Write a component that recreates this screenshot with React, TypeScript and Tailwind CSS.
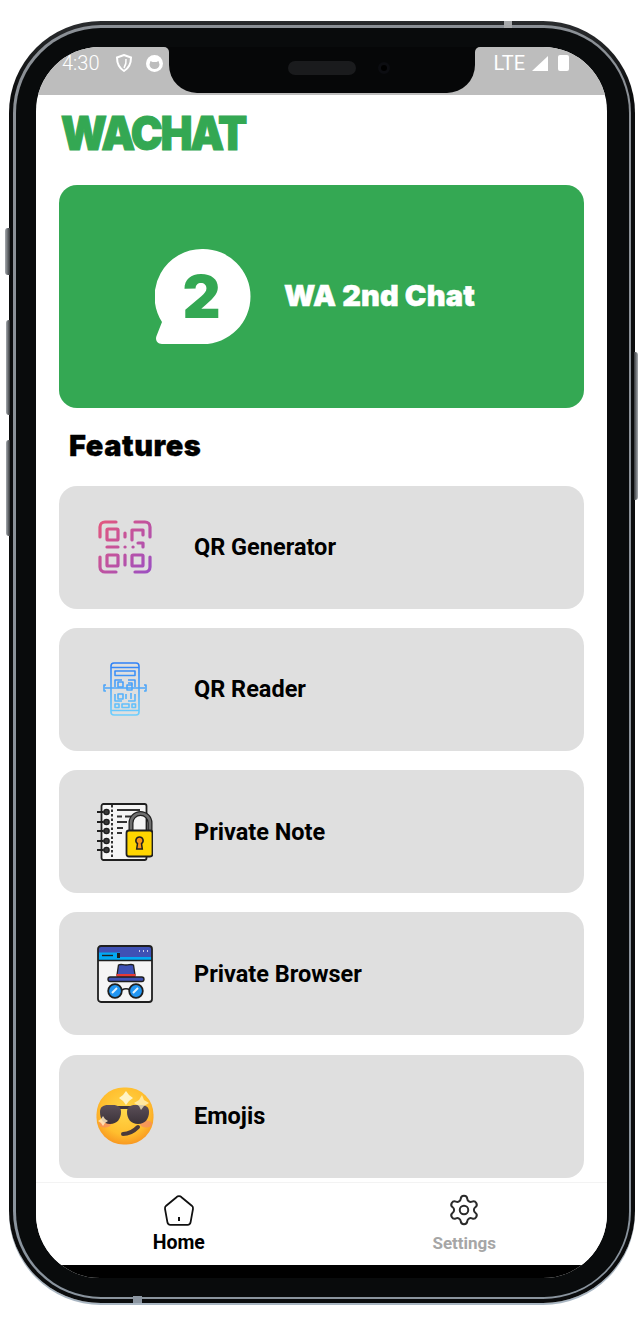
import { Settings } from 'lucide-react';

const features = [
  { label: 'QR Generator', icon: <QrGeneratorIcon /> },
  { label: 'QR Reader', icon: <QrReaderIcon /> },
  { label: 'Private Note', icon: <NoteIcon /> },
  { label: 'Private Browser', icon: <BrowserIcon /> },
  { label: 'Emojis', icon: <EmojiIcon /> },
];

function QrGeneratorIcon() {
  return (
    <svg width="54" height="54" viewBox="0 0 54 54" fill="none">
      <defs>
        <linearGradient id="qrg" gradientUnits="userSpaceOnUse" x1="0" y1="0" x2="54" y2="54">
          <stop offset="0" stopColor="#e5577c" />
          <stop offset="1" stopColor="#9a4fc4" />
        </linearGradient>
      </defs>
      <g stroke="url(#qrg)" strokeWidth="3.2" strokeLinecap="round" strokeLinejoin="round">
        <path d="M2 17V7a5 5 0 0 1 5-5h11" />
        <path d="M37 2h10a5 5 0 0 1 5 5v10" />
        <path d="M2 37v10a5 5 0 0 0 5 5h11" />
        <path d="M37 52h10a5 5 0 0 0 5-5V37" />
        <rect x="9" y="9" width="11" height="11" rx="1" />
        <rect x="9" y="35" width="11" height="11" rx="1" />
        <rect x="34" y="35" width="11" height="11" rx="1" />
        <path d="M9 27h11" />
        <path d="M27 13v4" />
        <path d="M27 35v10" />
        <path d="M27 27h.1" />
        <path d="M34 20V10h11v5" />
        <path d="M40 23h5v4" />
        <path d="M35 27h.1" />
      </g>
    </svg>
  );
}

function QrReaderIcon() {
  return (
    <svg width="44" height="54" viewBox="0 0 44 54" fill="none">
      <defs>
        <linearGradient id="qrr" gradientUnits="userSpaceOnUse" x1="0" y1="0" x2="0" y2="54">
          <stop offset="0" stopColor="#2f80f6" />
          <stop offset="1" stopColor="#6fd0fd" />
        </linearGradient>
      </defs>
      <g stroke="url(#qrr)" strokeWidth="1.6" strokeLinejoin="round">
        <rect x="8" y="1" width="28" height="52" rx="3" />
        <path d="M8 5.500h28M8 48.500h28" />
        <rect x="12" y="9" width="20" height="4.500" />
        <path d="M12 25v-7h7M25 18h7v7M12 32v7h7M32 32v7h-7" />
        <rect x="15" y="20" width="5" height="5" />
        <rect x="15" y="32" width="5" height="5" />
        <path d="M25 21h4v2M23 32v5M28 31v6" />
        <path d="M3 23H1v6h2M41 23h2v6h-2" />
        <path d="M2 26h40" />
        <rect x="24" y="23" width="5" height="5" />
        <rect x="12" y="42" width="4" height="3.500" />
        <rect x="19" y="42" width="7" height="3.500" />
        <rect x="29" y="42" width="3.500" height="3.500" />
      </g>
    </svg>
  );
}

function NoteIcon() {
  return (
    <svg width="56" height="58" viewBox="0 0 56 58" fill="none">
      <rect x="4.500" y="1" width="45" height="56" rx="2" fill="#f5f5f5" stroke="#1f1f1f" strokeWidth="1.800" />
      <path d="M15 2v54" stroke="#1f1f1f" strokeWidth="1.800" strokeDasharray="2.500 2" />
      {[9, 19, 28, 38, 47].map((y) => (
        <g key={y}>
          <path d={`M0 ${y}h6`} stroke="#1f1f1f" strokeWidth="1.800" strokeLinecap="round" />
          <circle cx="9.500" cy={y} r="2.600" fill="#3a3a3a" stroke="#1f1f1f" strokeWidth="1.400" />
        </g>
      ))}
      <path d="M20 7h23M20 13.500h5M28 13.500h6M20 19h10M20 25h6M20 30h5" stroke="#333" strokeWidth="1.800" />
      <path d="M34 28v-8a9.500 9.500 0 0 1 19 0v8" stroke="#1f1f1f" strokeWidth="5" />
      <path d="M34 28v-8a9.500 9.500 0 0 1 19 0v8" stroke="#6f6f6f" strokeWidth="2.600" />
      <rect x="29.500" y="27.500" width="26" height="26" rx="2.500" fill="#ffd600" stroke="#1f1f1f" strokeWidth="1.800" />
      <path d="M42.500 34a3.600 3.600 0 0 1 2 6.600l.8 5.400h-5.600l.8-5.400a3.600 3.600 0 0 1 2-6.600z" fill="#f7941d" stroke="#1f1f1f" strokeWidth="1.500" />
    </svg>
  );
}

function BrowserIcon() {
  return (
    <svg width="56" height="58" viewBox="0 0 56 58" fill="none">
      <rect x="1" y="1" width="54" height="56" rx="3" fill="#f5f5f5" />
      <path d="M1 15V4a3 3 0 0 1 3-3h48a3 3 0 0 1 3 3v11z" fill="#3f51b5" />
      <path d="M1 12h54v3.500H1z" fill="#03a9f4" />
      <rect x="2" y="7.500" width="21" height="7" fill="#03a9f4" />
      <path d="M5 10.500h11" stroke="#1f1f1f" strokeWidth="1.400" />
      <rect x="20" y="8" width="3" height="5" fill="#1f1f1f" />
      <path d="M1 15.500h54" stroke="#1f1f1f" strokeWidth="1.500" />
      <path d="M42 6h1M46 6h1M50 6h1" stroke="#c5cae9" strokeWidth="1.800" />
      <rect x="1" y="1" width="54" height="56" rx="3" stroke="#1f1f1f" strokeWidth="1.800" />
      <path d="M20 30l1.500-10c2.500-1.200 3.500-.2 7.500 0 4-.2 5-1.200 7.500 0L38 30z" fill="#3f51b5" stroke="#1f1f1f" strokeWidth="1.300" />
      <rect x="19.500" y="29" width="19" height="3.500" fill="#e53935" />
      <rect x="11" y="32" width="36" height="4.500" rx="2.200" fill="#3f51b5" stroke="#1f1f1f" strokeWidth="1.300" />
      <path d="M25 45c2.500-1.500 5.500-1.500 8 0" stroke="#1f1f1f" strokeWidth="1.500" />
      {[18, 39].map((cx) => (
        <g key={cx}>
          <circle cx={cx} cy="46" r="6.800" fill="#2196f3" stroke="#1f1f1f" strokeWidth="1.800" />
          <path d={`M${cx - 3} ${46 + 2}l5-5`} stroke="#e3f2fd" strokeWidth="2" />
        </g>
      ))}
    </svg>
  );
}

function EmojiIcon() {
  return (
    <svg width="58" height="58" viewBox="0 0 58 58" fill="none">
      <defs>
        <radialGradient id="emo" cx="0.5" cy="0.4" r="0.65">
          <stop offset="0" stopColor="#ffd84a" />
          <stop offset="0.65" stopColor="#ffbe2e" />
          <stop offset="1" stopColor="#f78f1e" />
        </radialGradient>
        <linearGradient id="lens" x1="0" y1="0" x2="0" y2="1">
          <stop offset="0" stopColor="#5b4f58" />
          <stop offset="1" stopColor="#3b3239" />
        </linearGradient>
      </defs>
      <rect x="0.500" y="0.500" width="57" height="57" rx="27" fill="url(#emo)" />
      <ellipse cx="9" cy="37" rx="6" ry="3.500" fill="#f58a6a" opacity="0.7" />
      <ellipse cx="50" cy="37" rx="6" ry="3.500" fill="#f58a6a" opacity="0.7" />
      <path d="M22 19h16v3H22z" fill="#40363d" />
      <path d="M4 25c0-5 3-7 8-7h5c5 0 8 2 8 7 0 7-4 12-11 12S4 32 4 25z" fill="url(#lens)" />
      <path d="M31 25c0-5 3-7 8-7h6c5 0 8 2 8 7 0 7-4 12-11 12s-11-5-11-12z" fill="url(#lens)" />
      <path d="M30 4l3 4 4 3-4 3-3 4-3-4-4-3 4-3z" fill="#fff3c4" />
      <path d="M46 8l2 5 5 3-5 3-3 4-2-4-5-3 5-3z" fill="#fff3c4" opacity="0.75" />
      <path d="M7 29l2 3 3 2-3 2-2 3-2-3-3-2 3-2z" fill="#ffe9c0" opacity="0.85" />
      <path d="M27 47c6 0 11-3 15-7" stroke="#4a3a3a" strokeWidth="4" strokeLinecap="round" />
    </svg>
  );
}

function BubbleIcon() {
  return (
    <svg width="96" height="97" viewBox="0 0 96 97" className="shrink-0">
      <path d="M48 1a47.500 47.500 0 1 1 0 95H7c-5 0-7-4-5.500-8L7 74A47.500 47.500 0 0 1 48 1z" fill="#fff" />
      <text
        x="46.500"
        y="70"
        textAnchor="middle"
        fontFamily="Inter, sans-serif"
        fontWeight="900"
        fontSize="59"
        fill="#34a853"
      >
        2
      </text>
    </svg>
  );
}

function HomeIcon() {
  return (
    <svg width="32" height="32" viewBox="0 0 32 32" fill="none" stroke="#111" strokeWidth="1.800" strokeLinejoin="round">
      <path d="M13.500 2.200a3.500 3.500 0 0 1 5 0l10.300 8.500c1 .9 1.400 2 1.200 3.200l-2.400 13.300c-.3 1.700-1.400 2.600-3 2.600H7.400c-1.600 0-2.700-.9-3-2.600L2 13.900c-.2-1.200.2-2.300 1.200-3.200z" />
      <path d="M16 22v4" strokeWidth="2" />
    </svg>
  );
}

export default function App() {
  return (
    <div className="w-[642px] h-[1326px] bg-white pt-[21px] pl-[9px]" style={{ fontFamily: 'Roboto, sans-serif' }}>
      {/* phone body */}
      <div className="relative w-[626px] h-[1282px] rounded-[92px] p-[4px] bg-gradient-to-b from-[#2a2c2e] via-[#0b0c0d] via-[6%] to-[#0b0c0d] shadow-[0_2px_0_#a9b6c2]">
        <div className="absolute left-[-4px] top-[207px] w-[5px] h-[47px] rounded-l-[3px] bg-gradient-to-r from-[#a7abb0] to-[#35383b]" />
        <div className="absolute left-[-3px] top-[299px] w-[4px] h-[95px] rounded-l-[3px] bg-gradient-to-r from-[#a7abb0] to-[#35383b]" />
        <div className="absolute left-[-3px] top-[419px] w-[4px] h-[96px] rounded-l-[3px] bg-gradient-to-r from-[#a7abb0] to-[#35383b]" />
        <div className="absolute right-[-3px] top-[331px] w-[4px] h-[148px] rounded-r-[3px] bg-gradient-to-l from-[#a7abb0] to-[#35383b]" />
        <div className="absolute left-[495px] top-0 w-[8px] h-[7px] bg-[#a6a8aa]" />
        <div className="absolute left-[124px] bottom-0 w-[9px] h-[7px] bg-[#8b95a0]" />
        <div className="h-full rounded-[88px] p-[2.500px] bg-gradient-to-b from-[#8b9096] to-[#8a949e]">
          <div className="h-full rounded-[85px] bg-[#090b0c] pt-[19px] pl-[20.500px] pr-[21.500px] pb-[18.500px]">
            {/* screen */}
            <div className="relative h-full rounded-[64px] overflow-hidden bg-white flex flex-col">
              <div className="absolute left-[133px] top-0 w-[306px] h-[46px] bg-[#060708] rounded-b-[28px]">
                <div className="absolute left-[119px] top-[14px] w-[68px] h-[14px] rounded-full bg-[#1a1b1d]" />
                <div className="absolute left-[209px] top-[15px] w-[12px] h-[12px] rounded-full bg-[#000] border-[3px] border-[#0c0d11]" />
              </div>
              <div className="absolute left-[128px] top-0 w-[5px] h-[5px] bg-[#060708]">
                <div className="h-full bg-[#bdbdbd] rounded-tr-[5px]" />
              </div>
              <div className="absolute left-[439px] top-0 w-[5px] h-[5px] bg-[#060708]">
                <div className="h-full bg-[#bdbdbd] rounded-tl-[5px]" />
              </div>

              {/* status bar */}
              <div className="h-[48px] shrink-0 bg-[#bdbdbd] flex items-start justify-between pl-[26px] pr-[38px] pt-[5px] text-white">
                <div className="flex items-center gap-[17px]">
                  <span className="text-[20px] leading-[23px] font-light">4:30</span>
                  <svg width="16" height="18" viewBox="0 0 16 18" fill="none" stroke="#fff" strokeWidth="2">
                    <path d="M1 3.500 8 1l7 2.500c0 6-2 10.500-7 13.500C3 14 1 9.500 1 3.500z" />
                    <path d="M10 5c.5 4-.5 6.500-2 9" strokeWidth="1.500" />
                  </svg>
                  <svg width="17" height="17" viewBox="0 0 17 17" className="-ml-[3px]">
                    <circle cx="8.500" cy="8.500" r="8.500" fill="#fff" />
                    <path d="M3.500 9.500 4.500 6l2 1h4l2-1 1 3.500a5 4.500 0 0 1-10 0z" fill="#bdbdbd" />
                  </svg>
                </div>
                <div className="flex items-center gap-[7px]">
                  <span className="text-[20px] leading-[23px]">LTE</span>
                  <svg width="16" height="15" viewBox="0 0 16 15">
                    <path d="M16 0v15H0z" fill="#fff" />
                  </svg>
                  <div className="ml-[3px] w-[11px] h-[16px] rounded-[2px] bg-white" />
                </div>
              </div>

              {/* content */}
              <div className="flex-1 min-h-0 overflow-hidden px-[23px]">
                <div
                  className="text-[47px] leading-[44px] mt-[16px] pl-[2px] text-[#34a853] tracking-[-2.500px] [-webkit-text-stroke:1px_#34a853] origin-left scale-x-[0.91]"
                  style={{ fontFamily: 'Inter, sans-serif', fontWeight: 900 }}
                >
                  WACHAT
                </div>
                <div className="mt-[30px] h-[223px] rounded-[18px] bg-[#34a853] flex items-center pl-[96px] gap-[33px]">
                  <BubbleIcon />
                  <span
                    className="text-[29px] font-black text-white tracking-[0.150px] [-webkit-text-stroke:0.500px_#fff]"
                    style={{ fontFamily: 'Inter, sans-serif' }}
                  >
                    WA 2nd Chat
                  </span>
                </div>
                <h2
                  className="mt-[20px] ml-[10px] text-[29px] leading-[36px] font-black text-black tracking-[0.500px] [-webkit-text-stroke:0.300px_#000]"
                  style={{ fontFamily: 'Inter, sans-serif' }}
                >
                  Features
                </h2>
                <div className="mt-[22px] flex flex-col gap-[19.300px]">
                  {features.map((f) => (
                    <div key={f.label} className="h-[123px] shrink-0 rounded-[18px] bg-[#dfdfdf] flex items-center">
                      <div className="w-[135px] shrink-0 flex items-center justify-center pr-[4px]">{f.icon}</div>
                      <span className="text-[23.500px] leading-[30px] font-bold text-black">{f.label}</span>
                    </div>
                  ))}
                </div>
              </div>

              {/* bottom nav */}
              <div className="h-[83px] shrink-0 border-t border-[#f3f3f3] grid grid-cols-2 bg-white">
                <div className="flex flex-col items-center pt-[12px]">
                  <HomeIcon />
                  <span className="text-[19.500px] leading-[21px] mt-[5px] font-bold text-black">Home</span>
                </div>
                <div className="flex flex-col items-center pt-[10px]">
                  <Settings size={34} strokeWidth={1.4} className="text-[#2b2b2b]" />
                  <span className="text-[17px] leading-[20px] mt-[6px] font-bold text-[#a6a6a6]">Settings</span>
                </div>
              </div>
              <div className="h-[13px] shrink-0 bg-black" />
            </div>
          </div>
        </div>
      </div>
    </div>
  );
}
